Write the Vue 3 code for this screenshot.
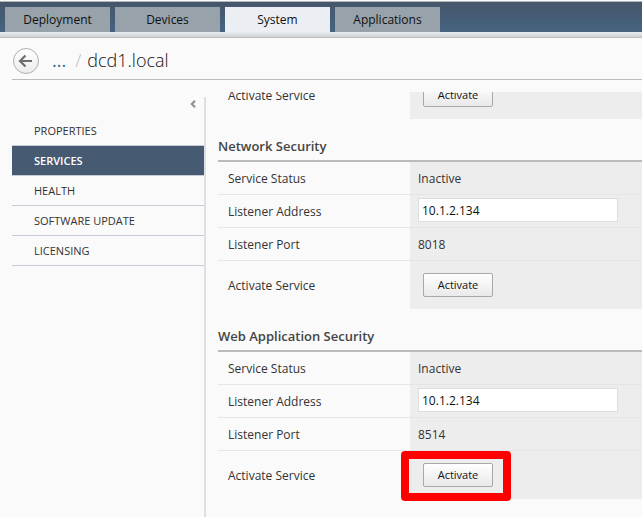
<script setup>
import { ref } from 'vue'

const tabs = ['Deployment', 'Devices', 'System', 'Applications']
const activeTab = ref('System')

const navItems = ['Properties', 'Services', 'Health', 'Software Update', 'Licensing']
const activeNav = ref('Services')

const services = ref([
  { id: 'network', title: 'Network Security', status: 'Inactive', address: '10.1.2.134', port: '8018', marked: false },
  { id: 'web', title: 'Web Application Security', status: 'Inactive', address: '10.1.2.134', port: '8514', marked: true },
])
</script>

<template>
  <div class="app">
    <nav class="tabs">
      <a
        v-for="tab in tabs"
        :key="tab"
        href="#"
        class="tab"
        :class="{ active: tab === activeTab }"
        @click.prevent="activeTab = tab"
      >{{ tab }}</a>
    </nav>
    <div class="strip"></div>

    <header class="crumbs">
      <button type="button" class="back" aria-label="Back">
        <svg viewBox="0 0 24 24" width="24" height="24" aria-hidden="true">
          <path d="M18 12H7M11.500 6.500L6 12l5.500 5.500" fill="none" stroke="#6e6e6e" stroke-width="2.200" />
        </svg>
      </button>
      <a href="#" class="more">...</a>
      <span class="slash">/</span>
      <h1>dcd1.local</h1>
    </header>

    <div class="body">
      <aside class="side">
        <button type="button" class="collapse" aria-label="Collapse menu">
          <svg viewBox="0 0 6 8" width="6" height="8" aria-hidden="true">
            <path d="M5 0.800L1.800 4L5 7.200" fill="none" stroke="#8c8c8c" stroke-width="2" />
          </svg>
        </button>
        <a
          v-for="item in navItems"
          :key="item"
          href="#"
          class="nav"
          :class="{ active: item === activeNav }"
          @click.prevent="activeNav = item"
        >{{ item }}</a>
      </aside>

      <main class="pane">
        <table class="props scrolled">
          <tbody>
            <tr class="tall">
              <th scope="row">Activate Service</th>
              <td><button type="button" class="btn">Activate</button></td>
            </tr>
          </tbody>
        </table>

        <section v-for="s in services" :key="s.id">
          <h2>{{ s.title }}</h2>
          <table class="props">
            <tbody>
              <tr>
                <th scope="row">Service Status</th>
                <td>{{ s.status }}</td>
              </tr>
              <tr class="field">
                <th scope="row"><label :for="s.id + '-address'">Listener Address</label></th>
                <td><input :id="s.id + '-address'" v-model="s.address" type="text" /></td>
              </tr>
              <tr>
                <th scope="row">Listener Port</th>
                <td>{{ s.port }}</td>
              </tr>
              <tr class="tall">
                <th scope="row">Activate Service</th>
                <td>
                  <div class="spot">
                    <button type="button" class="btn">Activate</button>
                    <span v-if="s.marked" class="marker"></span>
                  </div>
                </td>
              </tr>
            </tbody>
          </table>
        </section>
      </main>
    </div>
  </div>
</template>

<style>
body {
  background: #fafafa;
}
</style>

<style scoped>
.app {
  box-sizing: border-box;
  min-height: 100vh;
  display: flex;
  flex-direction: column;
  padding-top: 1px;
  overflow: hidden;
  color: #333;
  background: #fafafa;
  font: 12px/16px "Open Sans", "Noto Sans", sans-serif;
}

.app * {
  box-sizing: border-box;
}

.tabs {
  display: flex;
  gap: 5px;
  padding: 5px 5px 0;
  border-top: 1px solid #b4b8ba;
  background: linear-gradient(#46566b, #45647f);
}

.tab {
  width: 105px;
  height: 25px;
  line-height: 25px;
  text-align: center;
  color: #111;
  background: #98a2aa;
  text-decoration: none;
}

.tab.active {
  background: #ebeff3;
}

.strip {
  height: 6px;
  border-bottom: 1px solid #bcbebf;
  background: linear-gradient(#ebeff3, #cdd1d4);
}

.crumbs {
  display: flex;
  align-items: center;
  height: 42px;
  margin-left: 12px;
  padding: 2px 0 0 1px;
  border-bottom: 1px solid #bbb;
  font-size: 18px;
  line-height: 24px;
}

.back {
  display: flex;
  align-items: center;
  justify-content: center;
  width: 26px;
  height: 26px;
  margin-top: 3px;
  padding: 0;
  border: 1px solid #b0b0b0;
  border-radius: 50%;
  background: linear-gradient(#fff, #ececec);
}

.more {
  margin-left: 13px;
  color: #2b6a9b;
  text-decoration: none;
}

.slash {
  margin-left: 9px;
  color: #bbb;
  font-weight: 300;
}

h1 {
  margin: 0 0 0 6px;
  font-size: 18px;
  line-height: 24px;
  font-weight: 300;
  color: #111;
}

.body {
  flex: 1;
  display: flex;
}

.side {
  flex: none;
  display: flex;
  flex-direction: column;
  width: 194px;
  margin: 17px 0 0 12px;
  border-right: 2px solid #dce0e6;
}

.collapse {
  align-self: flex-end;
  display: flex;
  height: 19px;
  padding: 3px 8px 0 0;
  border: 0;
  background: none;
}

.nav {
  height: 30px;
  padding-left: 22px;
  border-bottom: 1px solid #c6ccd5;
  font-size: 11px;
  line-height: 30px;
  text-transform: uppercase;
  text-decoration: none;
  color: #333;
}

.nav.active {
  color: #fff;
  background: #465b72;
  font-weight: 600;
}

.pane {
  flex: 1;
  min-width: 0;
  margin: 12px 0 0 12px;
  overflow: hidden;
}

h2 {
  height: 43px;
  margin: 0;
  padding-top: 18px;
  border-bottom: 2px solid #bbb;
  font-size: 13px;
  line-height: 18px;
  font-weight: 600;
  color: #444;
}

.props {
  width: 100%;
  border-collapse: separate;
  border-spacing: 0;
  table-layout: fixed;
}

.scrolled {
  margin-top: -21px;
}

.props th,
.props td {
  height: 33px;
  padding: 2px 8px 0;
  border-bottom: 1px solid #e5e5e5;
  vertical-align: middle;
  text-align: left;
  font-weight: 400;
}

.props th {
  width: 192px;
  padding-left: 10px;
}

.props td {
  background: #ededed;
}

.props .field td {
  padding-top: 0;
  padding-bottom: 2px;
}

.props .tall th,
.props .tall td {
  height: 48px;
  border-bottom: 0;
}

.props .tall td {
  padding-top: 0;
}

input {
  display: block;
  width: 200px;
  height: 24px;
  padding: 0 3px;
  border: 1px solid #ddd;
  background: #fff;
  color: #111;
  font: inherit;
}

.spot {
  position: relative;
  width: 75px;
}

.btn {
  display: block;
  width: 70px;
  height: 24px;
  margin-left: 5px;
  padding: 0;
  border: 1px solid #a8a8a8;
  border-radius: 2px;
  background: linear-gradient(#fff, #e9e9e9);
  color: #111;
  font: inherit;
  font-size: 11px;
}

.marker {
  position: absolute;
  inset: -12px -18px -14px -17px;
  border: 8px solid #f00;
  border-radius: 4px;
  pointer-events: none;
}
</style>
